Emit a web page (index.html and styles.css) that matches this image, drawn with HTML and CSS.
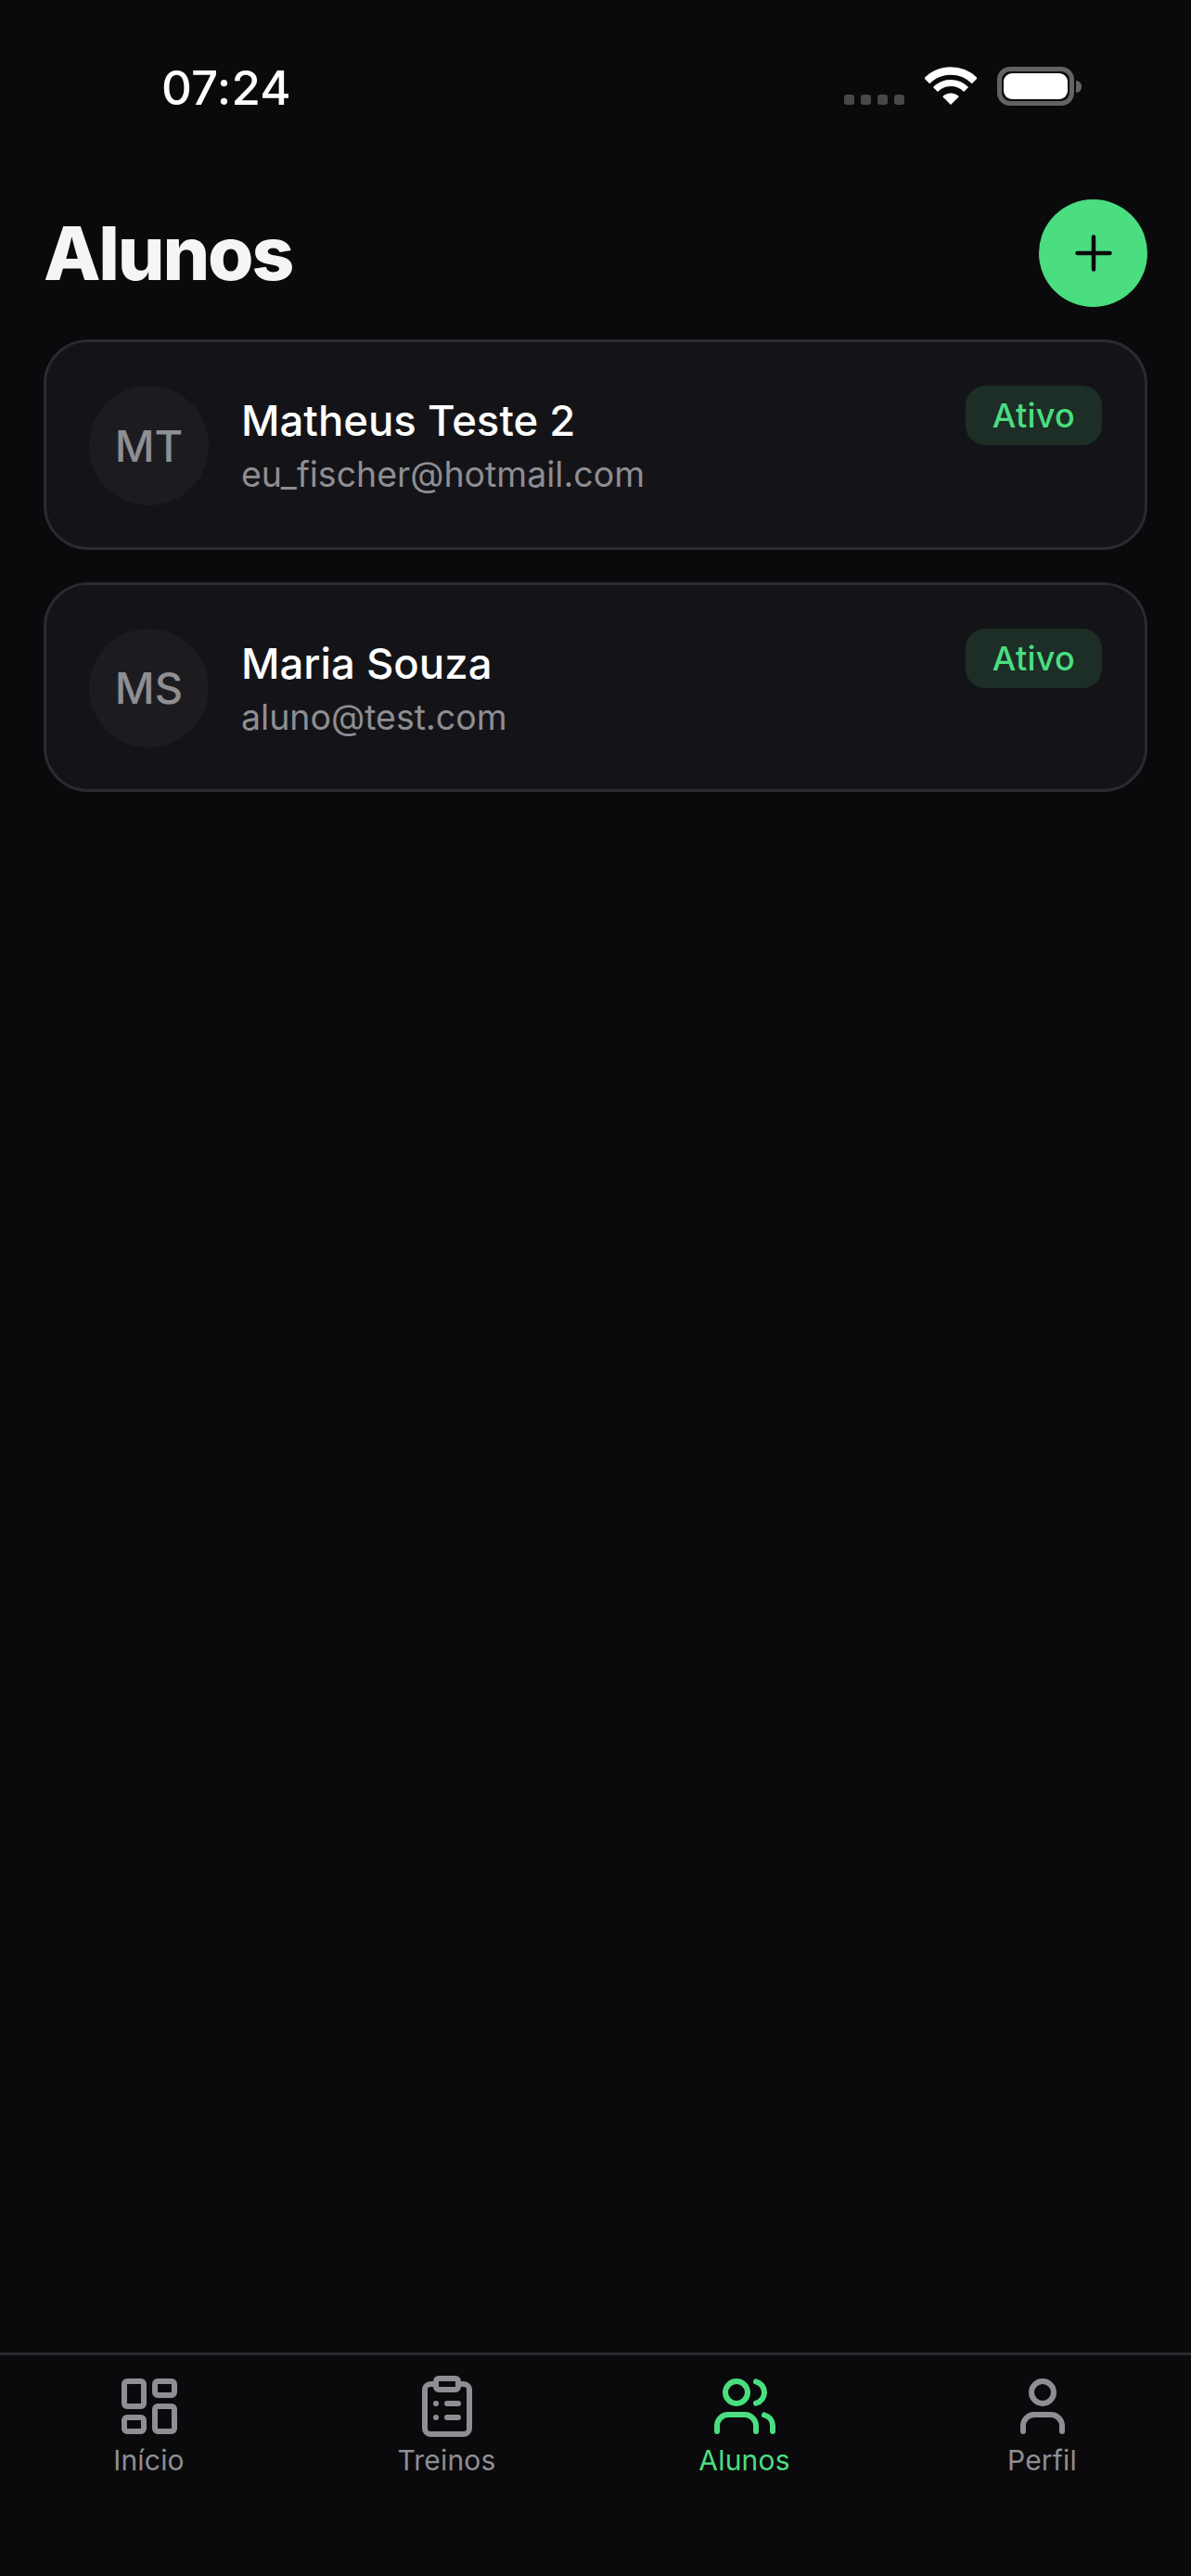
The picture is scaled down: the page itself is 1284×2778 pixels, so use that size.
FILE: index.html
```html
<!DOCTYPE html>
<html lang="pt-BR">
<head>
<meta charset="utf-8">
<title>Alunos</title>
<link rel="stylesheet" href="styles.css">
</head>
<body>
<div class="screen">
  <div class="status">
    <span class="time">07:24</span>
    <div class="status-icons">
      <div class="dots"><i></i><i></i><i></i><i></i></div>
      <svg class="wifi" width="56" height="41" viewBox="0 0 56 41">
        <path class="wifi-arc outer" d="M2.2 15.2A36.5 36.5 0 0 1 53.8 15.2"/>
        <path class="wifi-arc mid" d="M11.4 24.4A23.5 23.5 0 0 1 44.6 24.4"/>
        <path class="wifi-fill" d="M28 41L19.2 32.2A12.5 12.5 0 0 1 36.8 32.2Z"/>
      </svg>
      <div class="battery"><div class="battery-level"></div></div>
      <div class="battery-nub"></div>
    </div>
  </div>

  <header class="header">
    <h1 class="title">Alunos</h1>
    <button class="add" type="button" aria-label="Adicionar">
      <svg width="48" height="48" viewBox="0 0 48 48"><path class="plus" d="M6.5 24H41.5M24 6.5V41.5"/></svg>
    </button>
  </header>

  <main class="list">
    <article class="card">
      <div class="avatar">MT</div>
      <div class="info">
        <div class="name">Matheus Teste 2</div>
        <div class="email">eu_fischer@hotmail.com</div>
      </div>
      <span class="badge">Ativo</span>
    </article>
    <article class="card">
      <div class="avatar">MS</div>
      <div class="info">
        <div class="name">Maria Souza</div>
        <div class="email">aluno@test.com</div>
      </div>
      <span class="badge">Ativo</span>
    </article>
  </main>

  <nav class="nav">
    <div class="tab">
      <svg class="tab-icon" viewBox="0 0 24 24"><rect x="3" y="3" width="7" height="9" rx="1"/><rect x="14" y="3" width="7" height="5" rx="1"/><rect x="14" y="12" width="7" height="9" rx="1"/><rect x="3" y="16" width="7" height="5" rx="1"/></svg>
      <span class="tab-label">Início</span>
    </div>
    <div class="tab">
      <svg class="tab-icon" viewBox="0 0 24 24"><rect x="8" y="2" width="8" height="4" rx="1"/><path d="M16 4h2a2 2 0 0 1 2 2v14a2 2 0 0 1-2 2H6a2 2 0 0 1-2-2V6a2 2 0 0 1 2-2h2"/><path d="M12 11h4"/><path d="M12 16h4"/><path d="M8 11h.01"/><path d="M8 16h.01"/></svg>
      <span class="tab-label">Treinos</span>
    </div>
    <div class="tab active">
      <svg class="tab-icon" viewBox="0 0 24 24"><path d="M16 21v-2a4 4 0 0 0-4-4H6a4 4 0 0 0-4 4v2"/><circle cx="9" cy="7" r="4"/><path d="M22 21v-2a4 4 0 0 0-3-3.87"/><path d="M16 3.13a4 4 0 0 1 0 7.75"/></svg>
      <span class="tab-label">Alunos</span>
    </div>
    <div class="tab">
      <svg class="tab-icon" viewBox="0 0 24 24"><path d="M19 21v-2a4 4 0 0 0-4-4H9a4 4 0 0 0-4 4v2"/><circle cx="12" cy="7" r="4"/></svg>
      <span class="tab-label">Perfil</span>
    </div>
  </nav>
</div>
</body>
</html>
```

FILE: styles.css
```css
* { box-sizing: border-box; }
html, body { margin: 0; padding: 0; background: #0a0a0c; }
body { font-family: Inter, "Liberation Sans", sans-serif; }

.screen {
  width: 1284px;
  height: 2778px;
  display: flex;
  flex-direction: column;
  background: #0a0a0c;
  overflow: hidden;
}

/* Status bar */
.status {
  height: 132px;
  padding: 72px 118px 0 174px;
  display: flex;
  justify-content: space-between;
  align-items: flex-start;
}
.time {
  font-size: 51px;
  line-height: 45px;
  font-weight: 550;
  letter-spacing: 0.2px;
  color: #fff;
}
.status-icons {
  display: flex;
  align-items: center;
  height: 42px;
}
.dots {
  display: flex;
  gap: 7px;
  align-self: flex-end;
  margin: 0 22px 1px 0;
}
.dots i {
  display: block;
  width: 11px;
  height: 11px;
  border-radius: 3px;
  background: #48484a;
}
.wifi { display: block; margin-right: 22px; align-self: flex-end; margin-bottom: 1px; }
.wifi-arc { fill: none; stroke: #fff; }
.wifi-arc.outer { stroke-width: 8.5; }
.wifi-arc.mid { stroke-width: 7; }
.wifi-fill { fill: #fff; }
.battery {
  width: 83px;
  height: 42px;
  padding: 2px;
  border: 5px solid #636366;
  border-radius: 14px;
}
.battery-level {
  width: 100%;
  height: 100%;
  border-radius: 9px;
  background: #fff;
}
.battery-nub {
  width: 6px;
  height: 13px;
  margin-left: 2px;
  border-radius: 0 6px 6px 0;
  background: #636366;
}

/* Header */
.header {
  margin-top: 83px;
  padding: 0 47px 0 47px;
  display: flex;
  align-items: center;
  justify-content: space-between;
}
.title {
  margin: 0;
  font-size: 80px;
  line-height: 116px;
  font-weight: 800;
  letter-spacing: -2.2px;
  color: #f5f5f7;
}
.add {
  width: 117px;
  height: 116px;
  padding: 0;
  border: 0;
  border-radius: 50%;
  background: #4ade80;
  display: flex;
  align-items: center;
  justify-content: center;
}
.plus {
  fill: none;
  stroke: #0a0a0c;
  stroke-width: 4.5;
  stroke-linecap: round;
}

/* List */
.list {
  flex: 1;
  padding: 35px 47px 0 47px;
  display: flex;
  flex-direction: column;
  gap: 35px;
}
.card {
  height: 226.7px;
  padding: 47px 46px 0 46px;
  display: flex;
  align-items: flex-start;
  background: #141418;
  border: 3px solid #2a2a30;
  border-radius: 48px;
}
.avatar {
  flex: none;
  width: 129px;
  height: 128.5px;
  margin-right: 35px;
  border-radius: 50%;
  background: #1c1c20;
  color: #8e8e93;
  font-size: 47px;
  font-weight: 550;
  display: flex;
  align-items: center;
  justify-content: center;
}
.info {
  flex: 1;
  min-width: 0;
  padding-top: 11px;
}
.name {
  font-size: 45.5px;
  line-height: 54px;
  font-weight: 550;
  color: #fff;
}
.email {
  margin-top: 5px;
  font-size: 37.5px;
  line-height: 52px;
  font-weight: 400;
  color: #8e8e93;
}
.badge {
  flex: none;
  width: 147px;
  height: 64px;
  border-radius: 21px;
  background: #1c2e26;
  color: #4ade80;
  font-size: 36px;
  font-weight: 550;
  line-height: 64px;
  letter-spacing: 0.3px;
  text-align: center;
}

/* Bottom navigation */
.nav {
  height: 241px;
  border-top: 3px solid #2a2a30;
  padding-top: 19px;
  display: flex;
  align-items: flex-start;
}
.tab {
  flex: 1;
  display: flex;
  flex-direction: column;
  align-items: center;
  color: #8e8e93;
}
.tab.active { color: #4ade80; }
.tab-icon {
  display: block;
  width: 72px;
  height: 72px;
  fill: none;
  stroke: currentColor;
  stroke-width: 2;
  stroke-linecap: round;
  stroke-linejoin: round;
}
.tab-label {
  margin-top: 4px;
  font-size: 30px;
  line-height: 36px;
  font-weight: 400;
  letter-spacing: 0.2px;
}
```
